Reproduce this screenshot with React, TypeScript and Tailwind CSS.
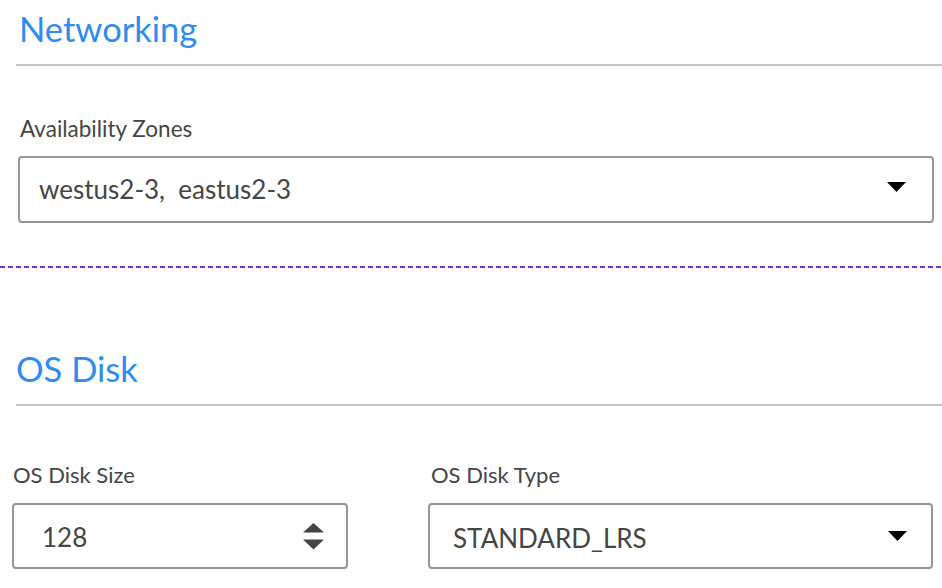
import React from "react";

const font = { fontFamily: "Lato, 'Noto Sans', sans-serif" };

function Caret() {
  return (
    <svg width="19" height="10" viewBox="0 0 19 10" className="shrink-0">
      <polygon points="0,0 19,0 9.5,10" fill="#000" />
    </svg>
  );
}

function Spinner() {
  return (
    <svg width="21" height="27" viewBox="0 0 21 27" className="shrink-0">
      <polygon points="0,9.5 21,9.5 10.5,0" fill="#444" />
      <polygon points="0,16.5 21,16.5 10.5,26.5" fill="#444" />
    </svg>
  );
}

export default function App() {
  return (
    <div
      className="w-[942px] h-[588px] bg-white overflow-hidden text-[#454545]"
      style={font}
    >
      {/* Networking */}
      <section className="pl-[16px]">
        <h2 className="pt-[8px] pl-[3px] text-[34.5px] leading-[42px] text-[#2e8cf0] font-normal">
          Networking
        </h2>
        <div className="mt-[14px] h-[2px] bg-[#c4c4c4]" />
        <div className="mt-[50px] pl-[4px] text-[22.5px] leading-[26px]">
          Availability Zones
        </div>
        <div className="mt-[14px] ml-[2px] mr-[8px] h-[67px] border-2 border-[#959595] rounded-[4px] flex items-center justify-between pl-[19px] pr-[26px]">
          <span className="text-[26px] whitespace-pre">westus2-3,  eastus2-3</span>
          <span className="-mt-[5px]">
            <Caret />
          </span>
        </div>
      </section>

      <div className="mt-[43px] h-[2px] bg-[repeating-linear-gradient(90deg,#6e32dc_0_5px,transparent_5px_8px)]" />

      {/* OS Disk */}
      <section className="pl-[16px]">
        <h2 className="pt-[80px] pl-[0px] text-[34.5px] leading-[42px] text-[#2e8cf0] font-normal">
          OS Disk
        </h2>
        <div className="mt-[14px] h-[2px] bg-[#c4c4c4]" />
      </section>

      <div className="mt-[56px] pl-[12px] pr-[9px] flex gap-[80px]">
        <div className="w-[336px] flex flex-col">
          <div className="pl-[1px] text-[22px] leading-[26px]">OS Disk Size</div>
          <div className="mt-[15px] h-[66px] border-2 border-[#959595] rounded-[4px] flex items-center justify-between pl-[28px] pr-[22px]">
            <span className="text-[26px] pt-[2px]">128</span>
            <Spinner />
          </div>
        </div>
        <div className="flex-1 flex flex-col">
          <div className="pl-[3px] text-[22px] leading-[26px]">OS Disk Type</div>
          <div className="mt-[15px] h-[66px] border-2 border-[#959595] rounded-[4px] flex items-center justify-between pl-[23px] pr-[24px]">
            <span className="text-[26px] pt-[4px]">STANDARD_LRS</span>
            <Caret />
          </div>
        </div>
      </div>
    </div>
  );
}
